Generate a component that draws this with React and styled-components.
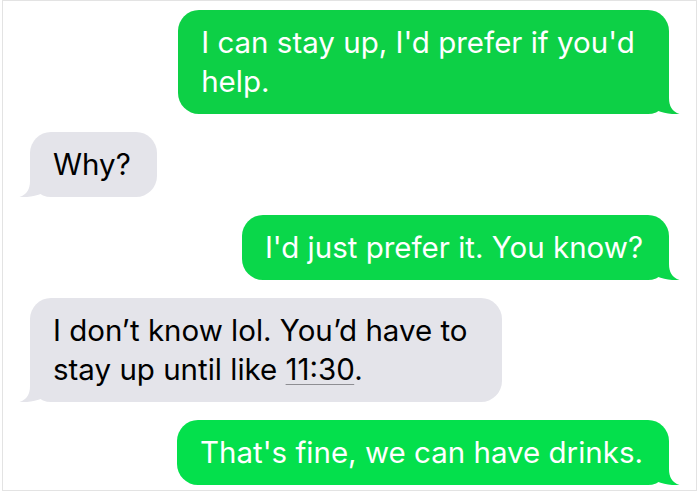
import React from 'react';
import styled, { createGlobalStyle } from 'styled-components';

const GlobalStyle = createGlobalStyle`
  html, body {
    margin: 0;
    padding: 0;
    background: #ffffff;
  }
  body {
    font-family: Inter, "Noto Sans", "Liberation Sans", sans-serif;
  }
`;

const Frame = styled.div`
  box-sizing: border-box;
  width: 695px;
  height: 491px;
  margin-left: 2px;
  border: 1px solid #e3e3e3;
  padding: 9px 27px 0 27px;
  display: flex;
  flex-direction: column;
  gap: 18px;
  overflow: hidden;
`;

const Row = styled.div`
  display: flex;
  justify-content: ${props => (props.$sent ? 'flex-end' : 'flex-start')};
`;

const Bubble = styled.div`
  position: relative;
  padding: 13px 26px 13px 23px;
  border-radius: 21px;
  background: ${props => props.$color};
  color: ${props => (props.$sent ? '#ffffff' : '#000000')};
  font-size: 29.5px;
  line-height: 39px;
  white-space: nowrap;
`;

const Tail = styled.svg`
  position: absolute;
  bottom: 0;
  width: 23px;
  height: 22px;
  ${props => (props.$sent ? 'right: -11px;' : 'left: -11px; transform: scaleX(-1);')}
`;

const Time = styled.span`
  text-decoration: underline;
  text-decoration-color: #8e8e93;
  text-decoration-thickness: 1px;
  text-underline-offset: 4px;
`;

const GRAY = '#e4e4ea';

function Message({ sent, color = GRAY, children }) {
  return (
    <Row $sent={sent}>
      <Bubble $sent={sent} $color={color}>
        {children}
        <Tail $sent={sent} viewBox="0 0 23 22">
          <path
            d="M0 0 H12 V6 C12 14 15 19.5 22.5 22 C16 22.6 7 21.5 0 18.5 Z"
            fill={color}
          />
        </Tail>
      </Bubble>
    </Row>
  );
}

export default function App() {
  return (
    <>
      <GlobalStyle />
      <Frame>
        <Message sent color="#0dd046">
          I can stay up, I'd prefer if you'd{'\u00a0'}
          <br />
          help.
        </Message>
        <Message>Why?</Message>
        <Message sent color="#0ad74a">
          I'd just prefer it. You know?
        </Message>
        <Message>
          I don’t know lol. You’d have to{'\u00a0'}
          <br />
          stay up until like <Time>11:30</Time>.
        </Message>
        <Message sent color="#04e04c">
          That's fine, we can have drinks.
        </Message>
      </Frame>
    </>
  );
}
